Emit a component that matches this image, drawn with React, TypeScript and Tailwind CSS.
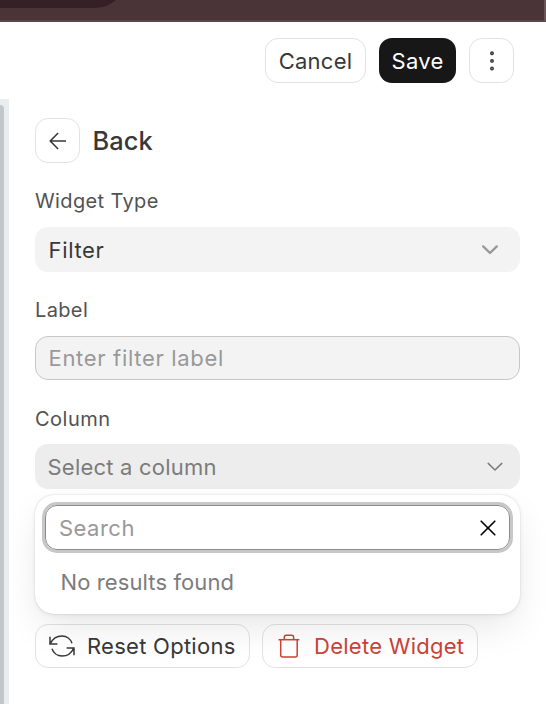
import React, { useState } from "react";

const FIELD_LABEL = "h-6 text-[20px] leading-6 text-[#525252]";
const OUTLINE_BTN = "flex items-center border border-[#e2e2e2] rounded-[13px]";

const ChevronDown = ({ className }: { className?: string }) => (
  <svg
    width="18"
    height="12"
    viewBox="0 0 18 12"
    fill="none"
    stroke="currentColor"
    strokeLinecap="round"
    strokeLinejoin="round"
    className={className}
  >
    <path d="M2.2 2.4L9 9L15.8 2.4" />
  </svg>
);

const ArrowLeft = () => (
  <svg width="18" height="18" viewBox="0 0 18 18" fill="none" stroke="#383838" strokeWidth="1.6">
    <path d="M9.1 1L1.2 9L9.1 17M1.2 9H17" strokeLinejoin="round" />
  </svg>
);

const MoreDots = () => (
  <svg width="6" height="20" viewBox="0 0 6 20" fill="#999999" stroke="#383838" strokeWidth="1.3">
    <circle cx="3" cy="2.3" r="1.3" />
    <circle cx="3" cy="9.9" r="1.3" />
    <circle cx="3" cy="17.5" r="1.3" />
  </svg>
);

const RefreshIcon = () => (
  <svg width="26" height="22" viewBox="0 0 26 22" fill="none" stroke="#383838" strokeWidth="1.5">
    <path d="M1 1.7V9H8.4M1.3 8.8C3.5 4 8 1 13 1C17.6 1 21.6 4 23 8.3" />
    <path d="M25 20.3V13H17.6M24.7 13.2C22.5 18 18 21 13 21C8.4 21 4.4 18 3 13.7" />
  </svg>
);

const TrashIcon = () => (
  <svg width="22" height="24" viewBox="0 0 22 24" fill="none" stroke="#cc4238" strokeWidth="1.5">
    <path d="M0.5 5.7H21.3" />
    <path d="M6.3 5.7V3.2C6.3 2 7 1.2 8.2 1.2H13.7C14.9 1.2 15.6 2 15.6 3.2V5.7" />
    <path d="M2.7 5.7V21C2.7 22.2 3.5 23 4.7 23H17.2C18.4 23 19.2 22.2 19.2 21V5.7" />
  </svg>
);

const CloseIcon = () => (
  <svg width="16" height="16" viewBox="0 0 16 16" stroke="#000000" strokeWidth="1.6" strokeLinecap="round">
    <path d="M1.2 1.2L14.8 14.8M14.8 1.2L1.2 14.8" />
  </svg>
);

const ColumnSelect = () => {
  const [search, setSearch] = useState("");
  return (
    <div className="relative">
      <button className="w-full h-[45px] pl-[12.5px] pr-[16px] flex items-center justify-between rounded-[13px] bg-[#ededed] text-[#7c7c7c]">
        <span className="pt-px tracking-[0.01em]">Select a column</span>
        <ChevronDown className="stroke-[1.5]" />
      </button>

      <div className="absolute z-10 left-0 top-[51px] w-full h-[119px] p-[8px] rounded-[19px] bg-white shadow-[0_0_1.6px_rgba(0,0,0,0.2),0_1.6px_4.8px_rgba(0,0,0,0.05),0_16px_38px_-5px_rgba(0,0,0,0.1)]">
        <div className="mx-[2px] mt-[2px] h-[45px] px-[13px] flex items-center rounded-[12px] border border-[#8c8c8c] ring-[3px] ring-[#c7c7c7]">
          <input
            value={search}
            onChange={(e) => setSearch(e.target.value)}
            placeholder="Search"
            className="flex-1 min-w-0 pt-px outline-none tracking-[0.022em] placeholder:text-[#999999]"
          />
          <button onClick={() => setSearch("")}>
            <CloseIcon />
          </button>
        </div>
        <p className="mt-[18px] pl-[17.5px] leading-7 tracking-[0.005em] text-[#7c7c7c]">No results found</p>
      </div>
    </div>
  );
};

export default function App() {
  return (
    <div className="w-[546px] h-[704px] flex flex-col overflow-hidden bg-white text-[22px] font-normal tracking-[0.012em] text-[#383838] font-['Inter',sans-serif]">
      <div className="h-[22px] shrink-0 bg-[#4b3437] border-b-2 border-r-2 border-b-[#5b4649] border-r-[#6a5457] overflow-hidden">
        <div className="w-[122px] h-[8px] bg-[#352025] [clip-path:path('M0_0H116C110_5_103_8_94_8H0Z')]" />
      </div>

      <header className="h-[77px] shrink-0 pt-[16px] pr-[32px] flex justify-end gap-[13px]">
        <button className={`${OUTLINE_BTN} h-[45px] w-[101px] pt-px justify-center`}>Cancel</button>
        <button className="h-[45px] w-[77px] pt-px rounded-[13px] bg-[#171717] text-white">Save</button>
        <button className={`${OUTLINE_BTN} h-[45px] w-[45px] justify-center`}>
          <MoreDots />
        </button>
      </header>

      <div className="flex flex-1 min-h-0">
        <div className="w-[9px] shrink-0 pt-[6px] bg-[#e9edf0]">
          <div className="w-[4px] h-full rounded-tr-[5px] bg-[#c2c6c9]" />
        </div>

        <aside className="flex-1 pl-[26px] pr-[26px] pt-[19px]">
          <div className="h-[45px] flex items-center gap-[12.5px]">
            <button className={`${OUTLINE_BTN} h-[45px] w-[45px] justify-center`}>
              <ArrowLeft />
            </button>
            <h2 className="pt-[2px] text-[25.4px] font-medium tracking-[0.004em]">Back</h2>
          </div>

          <p className={`${FIELD_LABEL} mt-[26px] tracking-[0.018em]`}>Widget Type</p>
          <button className="mt-[14px] w-full h-[45px] pl-[13.5px] pr-[21px] flex items-center justify-between rounded-[13px] bg-[#f3f3f3]">
            <span className="pt-px tracking-[0.03em]">Filter</span>
            <ChevronDown className="stroke-[2.4] text-[#999999]" />
          </button>

          <p className={`${FIELD_LABEL} mt-[26px] tracking-[0.018em]`}>Label</p>
          <input
            placeholder="Enter filter label"
            className="block mt-[14px] w-full h-[44px] px-[12.5px] rounded-[13px] border border-[#c7c7c7] bg-[#f3f3f3] tracking-[0.031em] placeholder:text-[#999999]"
          />

          <p className={`${FIELD_LABEL} mt-[27px] mb-[13px] tracking-[0.025em]`}>Column</p>
          <ColumnSelect />

          <div className="mt-[135px] flex gap-[12px]">
            <button className={`${OUTLINE_BTN} h-[44px] w-[215px] pl-[13px] gap-[12px] whitespace-nowrap`}>
              <RefreshIcon />
              Reset Options
            </button>
            <button className={`${OUTLINE_BTN} h-[44px] w-[216px] pl-[15px] gap-[14px] whitespace-nowrap text-[#cc4238]`}>
              <TrashIcon />
              Delete Widget
            </button>
          </div>
        </aside>
      </div>
    </div>
  );
}
